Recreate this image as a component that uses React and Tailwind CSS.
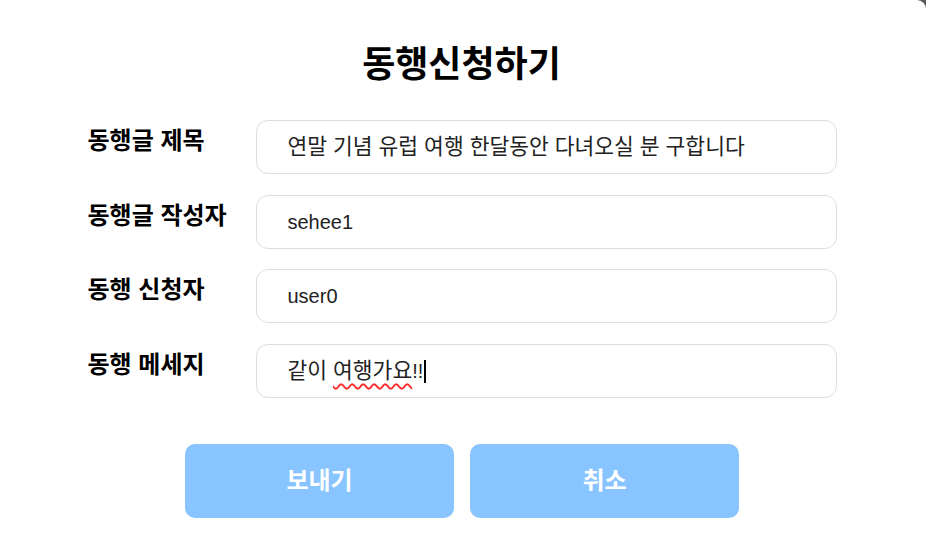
export default function App() {
  const rows = [
    { label: "동행글 제목", value: <span className="text-[21.5px]">연말 기념 유럽 여행 한달동안 다녀오실 분 구합니다</span> },
    { label: "동행글 작성자", value: "sehee1" },
    { label: "동행 신청자", value: "user0" },
  ];
  const font = { fontFamily: '"Liberation Sans", "Noto Sans CJK KR", sans-serif' };
  return (
    <div className="w-[926px] h-[551px] bg-[#5a5a5a] overflow-hidden" style={font}>
      <div className="w-full h-full bg-white rounded-tr-[9px] flex flex-col items-center">
        <h1 className="mt-[41px] text-[36px] leading-[48px] font-bold text-black mr-[3px]">동행신청하기</h1>
        <div className="mt-[31px] w-[749px] ml-[-2px] flex flex-col gap-[20.7px]">
          {rows.map((r) => (
            <div key={r.label} className="flex items-start">
              <div className="w-[168px] pt-[3px] text-[24px] leading-[36px] font-bold text-black">{r.label}</div>
              <div className="flex-1 h-[54px] border border-[#dedede] rounded-[12px] flex items-center pl-[31px] text-[20px] text-[#222] whitespace-pre">
                {r.value}
              </div>
            </div>
          ))}
          <div className="flex items-start">
            <div className="w-[168px] pt-[3px] text-[24px] leading-[36px] font-bold text-black">동행 메세지</div>
            <div className="flex-1 h-[54px] border border-[#dedede] rounded-[12px] flex items-center pl-[31px] text-[20px] text-[#222] whitespace-pre">
              <span className="text-[21.5px]">같이 </span>
              <span className="text-[21.5px] underline decoration-wavy decoration-[#ff2a2a] decoration-[1.5px] underline-offset-[5px]">여행가요</span>
              <span>!!</span>
              <span className="inline-block w-[2px] h-[23px] bg-black ml-[1px]"></span>
            </div>
          </div>
        </div>
        <div className="mt-[46px] flex gap-[16px] ml-[-2px]">
          <button className="w-[269px] h-[74px] rounded-[10px] bg-[#88c4ff] text-white text-[24px] font-bold">보내기</button>
          <button className="w-[269px] h-[74px] rounded-[10px] bg-[#88c4ff] text-white text-[24px] font-bold">취소</button>
        </div>
      </div>
    </div>
  );
}
